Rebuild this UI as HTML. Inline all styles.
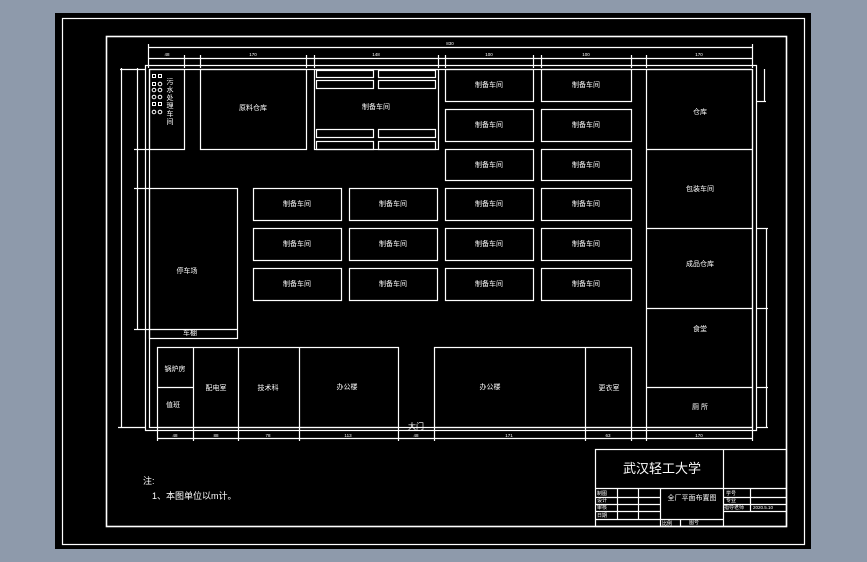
<!DOCTYPE html>
<html><head><meta charset="utf-8"><style>
html,body{margin:0;padding:0;background:#8e9aab;}
svg{display:block}
text{font-family:"Liberation Sans","Noto Sans CJK SC",sans-serif;fill:#fff;}
</style></head><body>
<svg width="867" height="562" viewBox="0 0 867 562" xmlns="http://www.w3.org/2000/svg">
<rect x="0" y="0" width="867" height="562" fill="#8e9aab"/>
<rect x="55" y="13" width="756" height="536" fill="#000"/>
<g fill="none" stroke="#fff" stroke-width="1.2">
<rect x="62.5" y="18.5" width="742" height="526"/>
<rect x="106.5" y="36.5" width="680" height="490" stroke-width="1.6"/>
<rect x="145.5" y="65.5" width="611" height="365"/>
<rect x="149.5" y="69.5" width="603" height="358"/>
<rect x="149.5" y="69.5" width="35" height="80"/>
<rect x="200.5" y="69.5" width="106" height="80"/>
<rect x="314.5" y="69.5" width="124" height="80"/>
<rect x="316.5" y="70.5" width="57" height="7"/><rect x="378.5" y="70.5" width="57" height="7"/>
<rect x="316.5" y="80.5" width="57" height="8"/><rect x="378.5" y="80.5" width="57" height="8"/>
<rect x="316.5" y="129.5" width="57" height="8"/><rect x="378.5" y="129.5" width="57" height="8"/>
<rect x="316.5" y="141.5" width="57" height="8"/><rect x="378.5" y="141.5" width="57" height="8"/>
<rect x="445.5" y="69.5" width="88" height="32"/><rect x="541.5" y="69.5" width="90" height="32"/>
<rect x="445.5" y="109.5" width="88" height="32"/><rect x="541.5" y="109.5" width="90" height="32"/>
<rect x="445.5" y="149.5" width="88" height="31"/><rect x="541.5" y="149.5" width="90" height="31"/>
<rect x="253.5" y="188.5" width="88" height="32"/><rect x="349.5" y="188.5" width="88" height="32"/><rect x="445.5" y="188.5" width="88" height="32"/><rect x="541.5" y="188.5" width="90" height="32"/>
<rect x="253.5" y="228.5" width="88" height="32"/><rect x="349.5" y="228.5" width="88" height="32"/><rect x="445.5" y="228.5" width="88" height="32"/><rect x="541.5" y="228.5" width="90" height="32"/>
<rect x="253.5" y="268.5" width="88" height="32"/><rect x="349.5" y="268.5" width="88" height="32"/><rect x="445.5" y="268.5" width="88" height="32"/><rect x="541.5" y="268.5" width="90" height="32"/>
<rect x="149.5" y="188.5" width="88" height="150"/>
<line x1="149" y1="329.5" x2="237" y2="329.5"/>
<rect x="646.5" y="69.5" width="106" height="358"/>
<line x1="646" y1="149.5" x2="752" y2="149.5"/><line x1="646" y1="228.5" x2="752" y2="228.5"/>
<line x1="646" y1="308.5" x2="752" y2="308.5"/><line x1="646" y1="387.5" x2="752" y2="387.5"/>
<rect x="157.5" y="347.5" width="241" height="80"/>
<line x1="193.5" y1="347" x2="193.5" y2="427"/><line x1="157" y1="387.5" x2="193" y2="387.5"/>
<line x1="238.5" y1="347" x2="238.5" y2="427"/><line x1="299.5" y1="347" x2="299.5" y2="427"/>
<rect x="434.5" y="347.5" width="197" height="80"/>
<line x1="585.5" y1="347" x2="585.5" y2="427"/>
<line x1="148" y1="47.5" x2="752" y2="47.5"/>
<line x1="148.5" y1="44" x2="148.5" y2="68"/><line x1="752.5" y1="44" x2="752.5" y2="68"/>
<line x1="148" y1="58.5" x2="752" y2="58.5"/>
<line x1="184.5" y1="55" x2="184.5" y2="68"/><line x1="200.5" y1="55" x2="200.5" y2="68"/>
<line x1="306.5" y1="55" x2="306.5" y2="68"/><line x1="314.5" y1="55" x2="314.5" y2="68"/>
<line x1="438.5" y1="55" x2="438.5" y2="68"/><line x1="445.5" y1="55" x2="445.5" y2="68"/>
<line x1="533.5" y1="55" x2="533.5" y2="68"/><line x1="541.5" y1="55" x2="541.5" y2="68"/>
<line x1="631.5" y1="55" x2="631.5" y2="68"/><line x1="646.5" y1="55" x2="646.5" y2="68"/>
<line x1="157" y1="438.5" x2="752" y2="438.5"/>
<line x1="157.5" y1="428" x2="157.5" y2="441"/><line x1="193.5" y1="428" x2="193.5" y2="441"/>
<line x1="238.5" y1="428" x2="238.5" y2="441"/><line x1="299.5" y1="428" x2="299.5" y2="441"/>
<line x1="398.5" y1="428" x2="398.5" y2="441"/><line x1="434.5" y1="428" x2="434.5" y2="441"/>
<line x1="585.5" y1="428" x2="585.5" y2="441"/><line x1="631.5" y1="428" x2="631.5" y2="441"/>
<line x1="646.5" y1="428" x2="646.5" y2="441"/><line x1="752.5" y1="428" x2="752.5" y2="441"/>
<line x1="121.5" y1="68" x2="121.5" y2="427"/>
<line x1="120" y1="69.5" x2="145" y2="69.5"/><line x1="118" y1="427.5" x2="145" y2="427.5"/>
<line x1="137.5" y1="68" x2="137.5" y2="330"/>
<line x1="134" y1="149.5" x2="149" y2="149.5"/><line x1="134" y1="188.5" x2="149" y2="188.5"/><line x1="134" y1="329.5" x2="149" y2="329.5"/>
<line x1="764.5" y1="69" x2="764.5" y2="101"/><line x1="756" y1="101.5" x2="766" y2="101.5"/>
<line x1="766.5" y1="228" x2="766.5" y2="427"/>
<line x1="756" y1="228.5" x2="768" y2="228.5"/><line x1="756" y1="308.5" x2="768" y2="308.5"/><line x1="756" y1="387.5" x2="768" y2="387.5"/><line x1="756" y1="427.5" x2="768" y2="427.5"/>
<rect x="595.5" y="449.5" width="191" height="77"/>
<line x1="723.5" y1="449" x2="723.5" y2="527"/>
<line x1="595" y1="488.5" x2="786" y2="488.5"/>
<line x1="595" y1="497.5" x2="660" y2="497.5"/><line x1="595" y1="504.5" x2="660" y2="504.5"/>
<line x1="595" y1="511.5" x2="660" y2="511.5"/><line x1="595" y1="519.5" x2="723" y2="519.5"/>
<line x1="617.5" y1="488" x2="617.5" y2="519"/><line x1="638.5" y1="488" x2="638.5" y2="519"/><line x1="660.5" y1="488" x2="660.5" y2="527"/>
<line x1="723" y1="497.5" x2="786" y2="497.5"/><line x1="723" y1="504.5" x2="786" y2="504.5"/><line x1="723" y1="511.5" x2="786" y2="511.5"/>
<line x1="750.5" y1="488" x2="750.5" y2="511"/>
<line x1="680.5" y1="519" x2="680.5" y2="527"/>
</g>
<g fill="none" stroke="#fff" stroke-width="1">
<rect x="152.5" y="74.5" width="3" height="3"/><rect x="158.5" y="74.5" width="3" height="3"/>
<rect x="152.5" y="82.5" width="3" height="3"/><circle cx="160" cy="84" r="1.8"/>
<circle cx="154" cy="90" r="1.8"/><circle cx="160" cy="90" r="1.8"/>
<circle cx="154" cy="97" r="1.8"/><circle cx="160" cy="97" r="1.8"/>
<rect x="152.5" y="102.5" width="3" height="3"/><rect x="158.5" y="102.5" width="3" height="3"/>
<circle cx="154" cy="112" r="1.8"/><circle cx="160" cy="112" r="1.8"/>
</g>
<g font-size="7" text-anchor="middle">
<text x="170" y="84">污</text><text x="170" y="92">水</text><text x="170" y="100">处</text>
<text x="170" y="108">理</text><text x="170" y="116">车</text><text x="170" y="124">间</text>
<text x="253" y="110">原料仓库</text>
<text x="376" y="109">制备车间</text>
<text x="489" y="87">制备车间</text><text x="586" y="87">制备车间</text>
<text x="489" y="127">制备车间</text><text x="586" y="127">制备车间</text>
<text x="489" y="167">制备车间</text><text x="586" y="167">制备车间</text>
<text x="297" y="206">制备车间</text><text x="393" y="206">制备车间</text><text x="489" y="206">制备车间</text><text x="586" y="206">制备车间</text>
<text x="297" y="246">制备车间</text><text x="393" y="246">制备车间</text><text x="489" y="246">制备车间</text><text x="586" y="246">制备车间</text>
<text x="297" y="286">制备车间</text><text x="393" y="286">制备车间</text><text x="489" y="286">制备车间</text><text x="586" y="286">制备车间</text>
<text x="187" y="273">停车场</text>
<text x="190" y="335">车棚</text>
<text x="700" y="114">仓库</text>
<text x="700" y="191">包装车间</text>
<text x="700" y="266">成品仓库</text>
<text x="700" y="331">食堂</text>
<text x="700" y="409">厕 所</text>
<text x="175" y="371">锅炉房</text>
<text x="173" y="407">值班</text>
<text x="216" y="390">配电室</text>
<text x="268" y="390">技术科</text>
<text x="347" y="389">办公楼</text>
<text x="490" y="389">办公楼</text>
<text x="609" y="390">更衣室</text>
<text x="416" y="429" font-size="8">大门</text>
</g>
<g font-size="4.5" text-anchor="middle">
<text x="450" y="45">830</text>
<text x="167" y="56">48</text><text x="253" y="56">170</text><text x="376" y="56">148</text>
<text x="489" y="56">100</text><text x="586" y="56">100</text><text x="699" y="56">170</text>
<text x="175" y="437">48</text><text x="216" y="437">88</text><text x="268" y="437">78</text><text x="348" y="437">113</text>
<text x="416" y="437">48</text><text x="509" y="437">171</text><text x="608" y="437">63</text><text x="699" y="437">170</text>
</g>
<text x="143" y="484" font-size="9">注:</text>
<text x="152" y="499" font-size="9">1、本图单位以m计。</text>
<text x="662" y="473" font-size="13" text-anchor="middle">武汉轻工大学</text>
<g font-size="5">
<text x="597" y="495">制图</text><text x="597" y="502">设计</text><text x="597" y="509">审核</text><text x="597" y="517">日期</text>
<text x="726" y="495">学号</text><text x="726" y="502">专业</text><text x="724" y="509">指导老师</text>
<text x="753" y="509" font-size="4.5">2020.5.10</text>
<text x="662" y="525">比例</text><text x="689" y="524">图号</text>
</g>
<text x="692" y="500" font-size="7" text-anchor="middle">全厂平面布置图</text>
</svg>
</body></html>
